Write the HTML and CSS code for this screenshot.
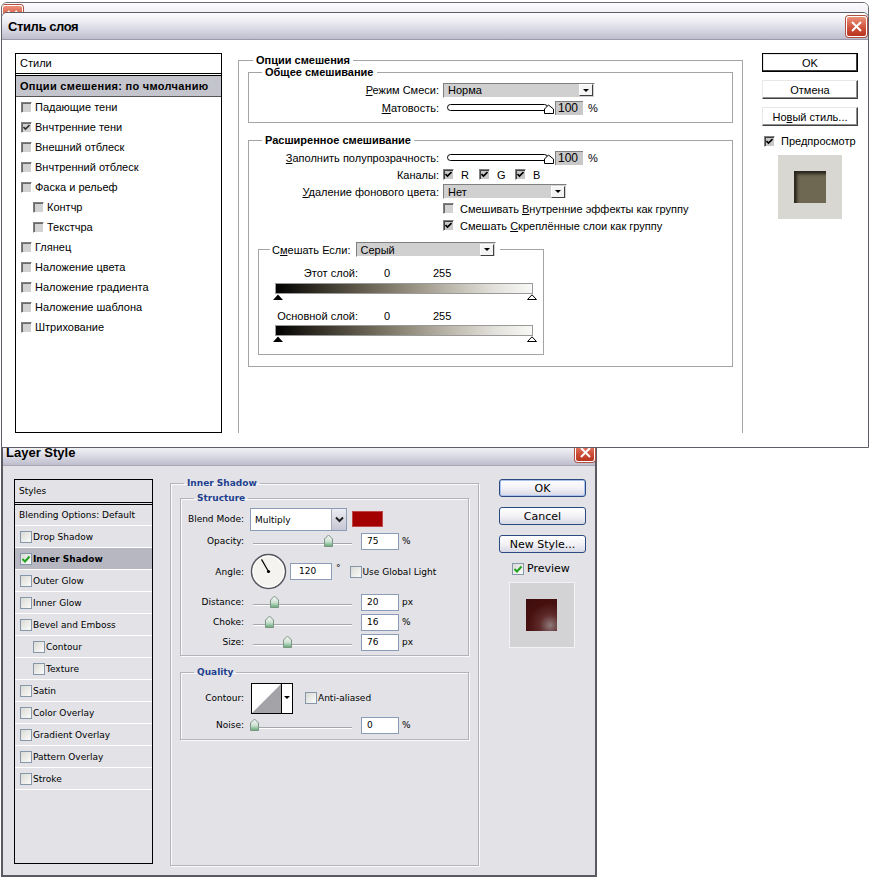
FILE: index.html
```html
<!DOCTYPE html>
<html lang="ru">
<head>
    <meta charset="UTF-8">
    <title>Стиль слоя</title>
    <link rel="stylesheet" href="styles.css">
</head>
<body>

<svg class="defs" width="0" height="0">
    <defs>
        <linearGradient id="thumbFill" x1="0" y1="0" x2="0" y2="1">
            <stop offset="0" stop-color="#f6f8f6"/>
            <stop offset="0.55" stop-color="#cfe2d4"/>
            <stop offset="1" stop-color="#5fa872"/>
        </linearGradient>
    </defs>
</svg>

<div class="desk">

    <!-- window behind everything, only its title bar edge shows -->
    <div class="win back-win">
        <div class="titlebar back-title">
            <span class="close"><svg width="11" height="11" viewBox="0 0 11 11"><path d="M1 1L10 10M10 1L1 10" stroke="#fff" stroke-width="2"/></svg></span>
        </div>
    </div>

    <!-- English dialog -->
    <div class="win en-win">
        <div class="titlebar en-title">
            <span class="title">Layer Style</span>
            <span class="close"><svg width="11" height="11" viewBox="0 0 11 11"><path d="M1 1L10 10M10 1L1 10" stroke="#fff" stroke-width="2"/></svg></span>
        </div>
        <div class="en-body">
            <div class="en-list">
                <div class="en-list-head">Styles</div>
                <div class="en-list-item plain">Blending Options: Default</div>
                <div class="en-list-item"><span class="xcb"></span>Drop Shadow</div>
                <div class="en-list-item current"><span class="xcb"><svg width="10" height="10" viewBox="0 0 10 10"><path d="M1.5 5 L4 7.5 L8.5 2.5" stroke="#21a121" stroke-width="2" fill="none"/></svg></span>Inner Shadow</div>
                <div class="en-list-item"><span class="xcb"></span>Outer Glow</div>
                <div class="en-list-item"><span class="xcb"></span>Inner Glow</div>
                <div class="en-list-item"><span class="xcb"></span>Bevel and Emboss</div>
                <div class="en-list-item sub"><span class="xcb"></span>Contour</div>
                <div class="en-list-item sub"><span class="xcb"></span>Texture</div>
                <div class="en-list-item"><span class="xcb"></span>Satin</div>
                <div class="en-list-item"><span class="xcb"></span>Color Overlay</div>
                <div class="en-list-item"><span class="xcb"></span>Gradient Overlay</div>
                <div class="en-list-item"><span class="xcb"></span>Pattern Overlay</div>
                <div class="en-list-item"><span class="xcb"></span>Stroke</div>
            </div>

            <fieldset class="en-main">
                <legend>Inner Shadow</legend>

                <fieldset class="en-group structure">
                    <legend>Structure</legend>

                    <div class="erow blend">
                        <span class="elabel">Blend Mode:</span>
                        <div class="select">
                            <span>Multiply</span>
                            <span class="select-btn"><svg width="9" height="7" viewBox="0 0 9 7"><path d="M1 1.5 L4.5 5 L8 1.5" stroke="#222" stroke-width="2" fill="none"/></svg></span>
                        </div>
                        <span class="swatch"></span>
                    </div>

                    <div class="erow">
                        <span class="elabel">Opacity:</span>
                        <svg class="slider" width="103" height="14" viewBox="0 0 103 14">
                            <path d="M3 9.5 H102" stroke="#a6a6ae"/>
                            <path d="M3 10.5 H102" stroke="#fff"/>
                            <path class="thumb" transform="translate(74 0)" d="M0.5 5 L4.5 1 L8.5 5 V12.5 H0.5 Z"/>
                        </svg>
                        <span class="einput">75</span>
                        <span class="unit">%</span>
                    </div>

                    <div class="erow angle">
                        <span class="elabel">Angle:</span>
                        <svg class="dial" width="37" height="37" viewBox="0 0 37 37">
                            <circle cx="18.5" cy="18.5" r="17" fill="#f5f3ef" stroke="#55555e" stroke-width="1.5"/>
                            <circle cx="18.5" cy="18.5" r="15.5" fill="none" stroke="#fff"/>
                            <path d="M18.5 18.5 L11.5 6.4" stroke="#000" stroke-width="1.2"/>
                            <circle cx="18.5" cy="18.5" r="1.6" fill="#000"/>
                        </svg>
                        <span class="einput angle-input">120</span>
                        <span class="unit deg">°</span>
                        <span class="xcb global"></span>
                        <span class="cb-text">Use Global Light</span>
                    </div>

                    <div class="erow">
                        <span class="elabel">Distance:</span>
                        <svg class="slider" width="103" height="14" viewBox="0 0 103 14">
                            <path d="M3 9.5 H102" stroke="#a6a6ae"/>
                            <path d="M3 10.5 H102" stroke="#fff"/>
                            <path class="thumb" transform="translate(20 0)" d="M0.5 5 L4.5 1 L8.5 5 V12.5 H0.5 Z"/>
                        </svg>
                        <span class="einput">20</span>
                        <span class="unit">px</span>
                    </div>

                    <div class="erow">
                        <span class="elabel">Choke:</span>
                        <svg class="slider" width="103" height="14" viewBox="0 0 103 14">
                            <path d="M3 9.5 H102" stroke="#a6a6ae"/>
                            <path d="M3 10.5 H102" stroke="#fff"/>
                            <path class="thumb" transform="translate(15 0)" d="M0.5 5 L4.5 1 L8.5 5 V12.5 H0.5 Z"/>
                        </svg>
                        <span class="einput">16</span>
                        <span class="unit">%</span>
                    </div>

                    <div class="erow">
                        <span class="elabel">Size:</span>
                        <svg class="slider" width="103" height="14" viewBox="0 0 103 14">
                            <path d="M3 9.5 H102" stroke="#a6a6ae"/>
                            <path d="M3 10.5 H102" stroke="#fff"/>
                            <path class="thumb" transform="translate(33 0)" d="M0.5 5 L4.5 1 L8.5 5 V12.5 H0.5 Z"/>
                        </svg>
                        <span class="einput">76</span>
                        <span class="unit">px</span>
                    </div>
                </fieldset>

                <fieldset class="en-group quality">
                    <legend>Quality</legend>

                    <div class="erow contour-row">
                        <span class="elabel">Contour:</span>
                        <svg class="contour" width="42" height="31" viewBox="0 0 42 31">
                            <rect x="0.5" y="0.5" width="41" height="30" fill="#fff" stroke="#000"/>
                            <path d="M1 30 L30 1 V30 Z" fill="#a4a4a8"/>
                            <path d="M30.5 0 V31" stroke="#000"/>
                            <path d="M33 13 H39 L36 16 Z" fill="#000"/>
                        </svg>
                        <span class="xcb anti"></span>
                        <span class="cb-text">Anti-aliased</span>
                    </div>

                    <div class="erow">
                        <span class="elabel">Noise:</span>
                        <svg class="slider" width="103" height="14" viewBox="0 0 103 14">
                            <path d="M3 9.5 H102" stroke="#a6a6ae"/>
                            <path d="M3 10.5 H102" stroke="#fff"/>
                            <path class="thumb" transform="translate(0 0)" d="M0.5 5 L4.5 1 L8.5 5 V12.5 H0.5 Z"/>
                        </svg>
                        <span class="einput">0</span>
                        <span class="unit">%</span>
                    </div>
                </fieldset>
            </fieldset>

            <div class="en-side">
                <button class="en-btn default">OK</button>
                <button class="en-btn">Cancel</button>
                <button class="en-btn">New Style...</button>
                <div class="en-preview-row">
                    <span class="xcb"><svg width="10" height="10" viewBox="0 0 10 10"><path d="M1.5 5 L4 7.5 L8.5 2.5" stroke="#21a121" stroke-width="2" fill="none"/></svg></span>
                    <span class="en-preview-text">Preview</span>
                </div>
                <div class="en-swatch"><div class="en-swatch-inner"></div></div>
            </div>
        </div>
    </div>

    <!-- Russian dialog, on top -->
    <div class="win ru-win">
        <div class="titlebar ru-title">
            <span class="title">Стиль слоя</span>
            <span class="close"><svg width="11" height="11" viewBox="0 0 11 11"><path d="M1 1L10 10M10 1L1 10" stroke="#fff" stroke-width="2"/></svg></span>
        </div>
        <div class="ru-body">
            <div class="ru-list">
                <div class="ru-list-head">Стили</div>
                <div class="ru-list-item current">Опции смешения: по чмолчанию</div>
                <div class="ru-list-item"><span class="cb dis"></span>Падающие тени</div>
                <div class="ru-list-item"><span class="cb dis"><svg width="7" height="7" viewBox="0 0 7 7"><path d="M0.5 3 L2.5 5 L6.5 1" stroke="#333" stroke-width="1.6" fill="none"/></svg></span>Внчтренние тени</div>
                <div class="ru-list-item"><span class="cb dis"></span>Внешний отблеск</div>
                <div class="ru-list-item"><span class="cb dis"></span>Внчтренний отблеск</div>
                <div class="ru-list-item"><span class="cb dis"></span>Фаска и рельеф</div>
                <div class="ru-list-item sub"><span class="cb dis"></span>Контчр</div>
                <div class="ru-list-item sub"><span class="cb dis"></span>Текстчра</div>
                <div class="ru-list-item"><span class="cb dis"></span>Глянец</div>
                <div class="ru-list-item"><span class="cb dis"></span>Наложение цвета</div>
                <div class="ru-list-item"><span class="cb dis"></span>Наложение градиента</div>
                <div class="ru-list-item"><span class="cb dis"></span>Наложение шаблона</div>
                <div class="ru-list-item"><span class="cb dis"></span>Штрихование</div>
            </div>

            <fieldset class="ru-outer">
                <legend>Опции смешения</legend>

                <fieldset class="ru-group general">
                    <legend>Общее смешивание</legend>
                    <div class="frow">
                        <span class="flabel"><u>Р</u>ежим Смеси:</span>
                        <div class="ru-drop mode">Норма<span class="ru-drop-btn"><i></i></span></div>
                    </div>
                    <div class="frow">
                        <span class="flabel"><u>М</u>атовость:</span>
                        <svg class="ru-slider" width="108" height="14" viewBox="0 0 108 14">
                            <rect x="0.5" y="3.5" width="100" height="6" rx="3" fill="#fff" stroke="#000"/>
                            <path d="M97.5 12.5 V8 L101.5 4 L106.5 8 V12.5 Z" fill="#fff" stroke="#000"/>
                        </svg>
                        <span class="ru-val">100</span>
                        <span class="ru-unit">%</span>
                    </div>
                </fieldset>

                <fieldset class="ru-group advanced">
                    <legend>Расширенное смешивание</legend>
                    <div class="frow">
                        <span class="flabel"><u>З</u>аполнить полупрозрачность:</span>
                        <svg class="ru-slider" width="108" height="14" viewBox="0 0 108 14">
                            <rect x="0.5" y="3.5" width="100" height="6" rx="3" fill="#fff" stroke="#000"/>
                            <path d="M97.5 12.5 V8 L101.5 4 L106.5 8 V12.5 Z" fill="#fff" stroke="#000"/>
                        </svg>
                        <span class="ru-val">100</span>
                        <span class="ru-unit">%</span>
                    </div>
                    <div class="frow">
                        <span class="flabel">Каналы:</span>
                        <span class="chan"><span class="cb"><svg width="7" height="7" viewBox="0 0 7 7"><path d="M0.5 3 L2.5 5 L6.5 1" stroke="#000" stroke-width="1.6" fill="none"/></svg></span>R</span>
                        <span class="chan"><span class="cb"><svg width="7" height="7" viewBox="0 0 7 7"><path d="M0.5 3 L2.5 5 L6.5 1" stroke="#000" stroke-width="1.6" fill="none"/></svg></span>G</span>
                        <span class="chan"><span class="cb"><svg width="7" height="7" viewBox="0 0 7 7"><path d="M0.5 3 L2.5 5 L6.5 1" stroke="#000" stroke-width="1.6" fill="none"/></svg></span>B</span>
                    </div>
                    <div class="frow">
                        <span class="flabel"><u>У</u>даление фонового цвета:</span>
                        <div class="ru-drop knock">Нет<span class="ru-drop-btn"><i></i></span></div>
                    </div>
                    <div class="frow">
                        <span class="flabel"></span>
                        <span class="cb dis"></span>
                        <span class="ru-cb-text">Смешивать <u>В</u>нутренние эффекты как группу</span>
                    </div>
                    <div class="frow">
                        <span class="flabel"></span>
                        <span class="cb"><svg width="7" height="7" viewBox="0 0 7 7"><path d="M0.5 3 L2.5 5 L6.5 1" stroke="#000" stroke-width="1.6" fill="none"/></svg></span>
                        <span class="ru-cb-text">Смешать <u>С</u>креплённые слои как группу</span>
                    </div>

                    <fieldset class="ru-blendif">
                        <legend>
                            <span class="blendif-label">С<u>м</u>ешать Если:</span>
                            <span class="ru-drop gray">Серый<span class="ru-drop-btn"><i></i></span></span>
                        </legend>

                        <div class="range-labels">
                            <span class="range-name">Этот слой:</span>
                            <span class="range-lo">0</span>
                            <span>255</span>
                        </div>
                        <div class="range-bar"></div>
                        <div class="range-marks">
                            <svg width="10" height="6" viewBox="0 0 10 6"><path d="M0 6 L5 0.5 L10 6 Z" fill="#000"/></svg>
                            <svg width="10" height="6" viewBox="0 0 10 6"><path d="M0.5 5.5 L5 0.8 L9.5 5.5 Z" fill="#fff" stroke="#000"/></svg>
                        </div>

                        <div class="range-labels second">
                            <span class="range-name">Основной слой:</span>
                            <span class="range-lo">0</span>
                            <span>255</span>
                        </div>
                        <div class="range-bar close-bar"></div>
                        <div class="range-marks">
                            <svg width="10" height="6" viewBox="0 0 10 6"><path d="M0 6 L5 0.5 L10 6 Z" fill="#000"/></svg>
                            <svg width="10" height="6" viewBox="0 0 10 6"><path d="M0.5 5.5 L5 0.8 L9.5 5.5 Z" fill="#fff" stroke="#000"/></svg>
                        </div>
                    </fieldset>
                </fieldset>
            </fieldset>

            <div class="ru-side">
                <button class="ru-btn default">OK</button>
                <button class="ru-btn">Отмена</button>
                <button class="ru-btn">Но<u>в</u>ый стиль...</button>
                <div class="ru-preview-row">
                    <span class="cb"><svg width="7" height="7" viewBox="0 0 7 7"><path d="M0.5 3 L2.5 5 L6.5 1" stroke="#000" stroke-width="1.6" fill="none"/></svg></span>
                    <span>Пре<u>д</u>просмотр</span>
                </div>
                <div class="ru-swatch"><div class="ru-swatch-inner"></div></div>
            </div>
        </div>
    </div>

</div>

</body>
</html>
```

FILE: styles.css
```css
* {
    box-sizing: border-box;
}

body {
    margin: 0;
    background: #fff;
    font-family: "Liberation Sans", Arial, sans-serif;
    font-size: 11px;
    color: #000;
}

.defs {
    position: absolute;
    width: 0;
    height: 0;
}

.desk {
    position: relative;
    width: 874px;
    height: 881px;
    overflow: hidden;
}

/* windows on the desktop */
.win {
    position: absolute;
    left: 1px;
}

.back-win {
    top: 2px;
    width: 868px;
    height: 40px;
    border: 1px solid #6c6c76;
    border-radius: 6px 6px 0 0;
    overflow: hidden;
    z-index: 1;
}

.en-win {
    top: 440px;
    width: 596px;
    height: 437px;
    border: 2px solid #5a5a62;
    background: #e2e2e7;
    z-index: 2;
}

.ru-win {
    top: 12px;
    width: 868px;
    height: 436px;
    border: 1px solid #5e5e68;
    border-radius: 6px 6px 0 0;
    background: #fff;
    overflow: hidden;
    z-index: 3;
}

.titlebar {
    display: flex;
    justify-content: space-between;
    background: linear-gradient(#fcfcfe, #ebebf2 35%, #d4d4e0 70%, #bdbdcc);
}

.back-title {
    height: 38px;
    align-items: flex-start;
    padding: 2px 1px 0 0;
}

.ru-title {
    height: 27px;
    align-items: center;
    padding: 0 1px 0 6px;
    border-bottom: 1px solid #9a9aaa;
}

.ru-title .title {
    font-size: 13px;
    font-weight: bold;
    letter-spacing: -0.4px;
}

.en-title {
    height: 24px;
    align-items: flex-start;
    padding: 0 0 0 3px;
    border-bottom: 1px solid #a8a8b4;
}

.en-title .title {
    padding-top: 4px;
    line-height: 14px;
    font-size: 13px;
    font-weight: bold;
}

.close {
    width: 21px;
    height: 21px;
    display: flex;
    align-items: center;
    justify-content: center;
    border: 1px solid #fff;
    border-radius: 3px;
    background: linear-gradient(#ec917a, #d0533c 55%, #b8341f);
    box-shadow: 0 0 0 1px #b05040;
}

.en-title .close {
    width: 20px;
    height: 20px;
}

/* ---------- Russian dialog ---------- */

.ru-body {
    display: flex;
    align-items: flex-start;
    padding: 13px 0 0 13px;
}

.ru-list {
    width: 207px;
    height: 380px;
    border: 1px solid #000;
}

.ru-list-head {
    height: 22px;
    line-height: 19px;
    padding-left: 4px;
    border-bottom: 3px double #000;
}

.ru-list-item {
    display: flex;
    align-items: center;
    height: 20px;
    padding-left: 5px;
    gap: 3px;
}

.ru-list-item.current {
    height: 21px;
    padding-left: 4px;
    background: #c4c4cc;
    border-bottom: 1px solid #555;
    font-weight: bold;
    letter-spacing: 0.3px;
}

.ru-list-item.sub {
    padding-left: 17px;
}

.cb {
    width: 11px;
    height: 11px;
    flex: none;
    display: inline-flex;
    align-items: center;
    justify-content: center;
    border: 1px solid;
    border-color: #808080 #fff #fff #808080;
    box-shadow: inset 1px 1px #404040;
    background: #c8c8c8;
}

.cb.dis {
    background: #d2d2d2;
    box-shadow: inset 1px 1px #6a6a6a;
}

.ru-body fieldset {
    margin: 0;
    padding: 0;
    min-width: 0;
    border: 1px solid #a4a4a4;
}

.ru-body legend {
    padding: 0 3px;
    line-height: 14px;
    font-weight: bold;
}

.ru-outer {
    width: 505px;
    height: 380px;
    margin-left: 16px !important;
    border-bottom: none !important;
}

.ru-outer > legend {
    margin-left: 14px;
}

.ru-group {
    margin: -2px 9px 0 !important;
}

.ru-group > legend {
    margin-left: 13px;
}

.ru-group.general {
    padding: 2px 0 5px !important;
}

.ru-group.advanced {
    margin-top: 10px !important;
    padding: 2px 0 11px !important;
}

.frow {
    display: flex;
    align-items: center;
    height: 17px;
}

.general .frow {
    height: 18px;
}

.flabel {
    width: 190px;
    margin-right: 4px;
    text-align: right;
    flex: none;
}

.ru-drop {
    display: flex;
    align-items: center;
    justify-content: space-between;
    height: 15px;
    padding-left: 4px;
    background: #d0d0d0;
    border: 1px solid;
    border-color: #808080 #fff #fff #808080;
    font-weight: normal;
}

.ru-drop.mode {
    width: 152px;
}

.ru-drop.knock {
    width: 124px;
}

.ru-drop.gray {
    width: 140px;
}

.ru-drop-btn {
    width: 14px;
    height: 12px;
    margin-right: 1px;
    display: flex;
    align-items: center;
    justify-content: center;
    background: #f4f4f4;
    border: 1px solid;
    border-color: #fff #404040 #404040 #fff;
}

.ru-drop-btn i {
    border-left: 3px solid transparent;
    border-right: 3px solid transparent;
    border-top: 3px solid #000;
}

.ru-slider {
    margin-left: 4px;
    flex: none;
}

.ru-val {
    width: 28px;
    height: 14px;
    padding-left: 2px;
    line-height: 13px;
    font-size: 12px;
    background: #c8c8c8;
    border-top: 1px solid #808080;
    border-left: 1px solid #808080;
}

.ru-unit {
    margin-left: 5px;
}

.chan {
    display: flex;
    align-items: center;
    gap: 7px;
    width: 36px;
}

.ru-cb-text {
    margin-left: 6px;
}

.ru-blendif {
    width: 286px;
    margin: 8px 0 0 9px !important;
    padding: 9px 0 12px !important;
}

.ru-blendif > legend {
    display: flex;
    align-items: center;
    height: 15px;
    margin-left: 11px;
    padding: 0 4px 0 2px;
    font-weight: normal;
}

.blendif-label {
    margin-right: 5px;
}

.range-labels {
    display: flex;
    height: 14px;
    line-height: 14px;
    padding-left: 16px;
}

.range-labels.second {
    margin-top: 9px;
}

.range-name {
    width: 83px;
    text-align: right;
}

.range-lo {
    width: 49px;
    margin-left: 26px;
}

.range-bar {
    height: 11px;
    margin: 3px 10px 0 16px;
    border: 1px solid #9a9a9a;
    background: linear-gradient(90deg, #000 0%, #2c2820 14%, #5e584a 32%, #8e8878 50%, #bcb8ac 68%, #e2e0da 85%, #f8f8f6 100%);
}

.range-bar.close-bar {
    margin-top: 2px;
}

.range-marks {
    display: flex;
    justify-content: space-between;
    height: 6px;
    margin: 0 6px 0 14px;
}

.range-marks svg {
    display: block;
}

.ru-side {
    width: 96px;
    margin-left: 19px;
}

.ru-btn {
    display: block;
    width: 96px;
    height: 19px;
    margin: 0 0 8px;
    padding: 0;
    font: 11px "Liberation Sans", Arial, sans-serif;
    color: #000;
    background: #fff;
    border: 1px solid;
    border-color: #e8e8e8 #404040 #404040 #e8e8e8;
    box-shadow: inset -1px -1px #909090;
}

.ru-btn.default {
    border-color: #000;
    box-shadow: inset -1px -1px #404040, inset 1px 1px #e8e8e8;
}

.ru-preview-row {
    display: flex;
    align-items: center;
    gap: 6px;
    height: 14px;
    margin: 8px 0 0 2px;
}

.ru-swatch {
    width: 64px;
    height: 64px;
    margin: 7px 0 0 16px;
    padding: 16px;
    background: #d9d7d1;
}

.ru-swatch-inner {
    width: 32px;
    height: 32px;
    background: #6e6752;
    box-shadow: inset 3px 3px 3px #2a261e;
}

/* ---------- English dialog ---------- */

.en-body {
    display: flex;
    align-items: flex-start;
    padding: 10px 0 0 11px;
    font-family: "DejaVu Sans", sans-serif;
    font-size: 9px;
}

.en-list {
    width: 139px;
    height: 385px;
    margin-top: 3px;
    border: 1px solid #000;
}

.en-list-head {
    height: 25px;
    line-height: 22px;
    padding-left: 4px;
    border-bottom: 3px double #000;
}

.en-list-item {
    display: flex;
    align-items: center;
    height: 22px;
    padding-left: 5px;
    gap: 1px;
    border-bottom: 1px solid #fff;
}

.en-list-item.plain {
    height: 21px;
    padding-left: 4px;
}

.en-list-item.current {
    background: #b7b7c1;
    font-weight: bold;
}

.en-list-item.sub {
    padding-left: 18px;
}

.xcb {
    width: 12px;
    height: 12px;
    flex: none;
    display: inline-flex;
    align-items: center;
    justify-content: center;
    border: 1px solid #8597a8;
    background: linear-gradient(135deg, #dadad4, #fbfbfb);
}

.en-body fieldset {
    margin: 0;
    padding: 0;
    min-width: 0;
    border: 1px solid #b2b2ba;
    box-shadow: 1px 1px 0 #fafafa, inset 1px 1px 0 #fafafa;
}

.en-body legend {
    margin-left: 13px;
    padding: 0 3px;
    line-height: 14px;
    font-weight: bold;
    color: #1e3f8e;
}

.en-main {
    width: 309px;
    height: 390px;
    margin-left: 17px !important;
}

.en-group {
    margin: 1px 9px 0 !important;
}

.en-group.structure {
    padding: 2px 0 3px !important;
}

.en-group.quality {
    margin-top: 9px !important;
    padding: 2px 0 4px !important;
}

.erow {
    display: flex;
    align-items: center;
    height: 20px;
}

.erow.blend {
    height: 24px;
}

.erow.angle {
    height: 41px;
}

.erow.contour-row {
    height: 34px;
}

.elabel {
    width: 63px;
    margin-right: 6px;
    text-align: right;
    flex: none;
}

.select {
    display: flex;
    align-items: stretch;
    justify-content: space-between;
    width: 97px;
    height: 23px;
    padding-left: 4px;
    background: #fff;
    border: 1px solid #8a9cb8;
}

.select span:first-child {
    align-self: center;
    padding-top: 2px;
}

.select-btn {
    width: 15px;
    display: flex;
    align-items: center;
    justify-content: center;
    background: linear-gradient(#ececf2, #c6c6d4);
    border-left: 1px solid #a8a8b8;
}

.swatch {
    width: 31px;
    height: 16px;
    margin-left: 5px;
    background: #a30000;
    border: 1px solid #c04848;
}

.slider {
    flex: none;
}

.slider .thumb {
    fill: url(#thumbFill);
    stroke: #7e9486;
}

.einput {
    width: 38px;
    height: 17px;
    margin-left: 8px;
    padding: 2px 0 0 5px;
    background: #fff;
    border: 1px solid #8a9cb8;
}

.unit {
    margin-left: 3px;
}

.dial {
    flex: none;
}

.einput.angle-input {
    width: 42px;
    margin-left: 3px;
    padding-left: 8px;
}

.unit.deg {
    margin-left: 4px;
    align-self: flex-start;
    margin-top: 12px;
}

.xcb.global {
    margin-left: 9px;
}

.cb-text {
    margin-left: 1px;
}

.contour {
    margin-left: 1px;
    flex: none;
}

.xcb.anti {
    margin-left: 12px;
}

.en-side {
    width: 87px;
    margin: 3px 0 0 20px;
}

.en-btn {
    display: block;
    width: 87px;
    height: 18px;
    margin: 0 0 10px;
    padding: 0;
    font: 11px "DejaVu Sans", sans-serif;
    color: #000;
    border: 1px solid #2a4a80;
    border-radius: 3px;
    background: linear-gradient(#ffffff, #f2f2f6 50%, #d6d8e4);
}

.en-btn.default {
    box-shadow: inset 0 0 0 1px #a8c2ee;
}

.en-preview-row {
    display: flex;
    align-items: center;
    height: 15px;
    margin: -2px 0 0 13px;
    font-size: 11px;
}

.en-preview-text {
    margin-left: 3px;
}

.en-swatch {
    width: 66px;
    height: 66px;
    margin: 6px 0 0 10px;
    padding: 16px;
    background: #d3d3d5;
    border: 1px solid #f2f2f4;
}

.en-swatch-inner {
    width: 31px;
    height: 32px;
    background: radial-gradient(circle at 78% 82%, #8e7a7a 0, #5e2a2a 30%, #46100f 62%, #3e0c0c 100%);
}
```
